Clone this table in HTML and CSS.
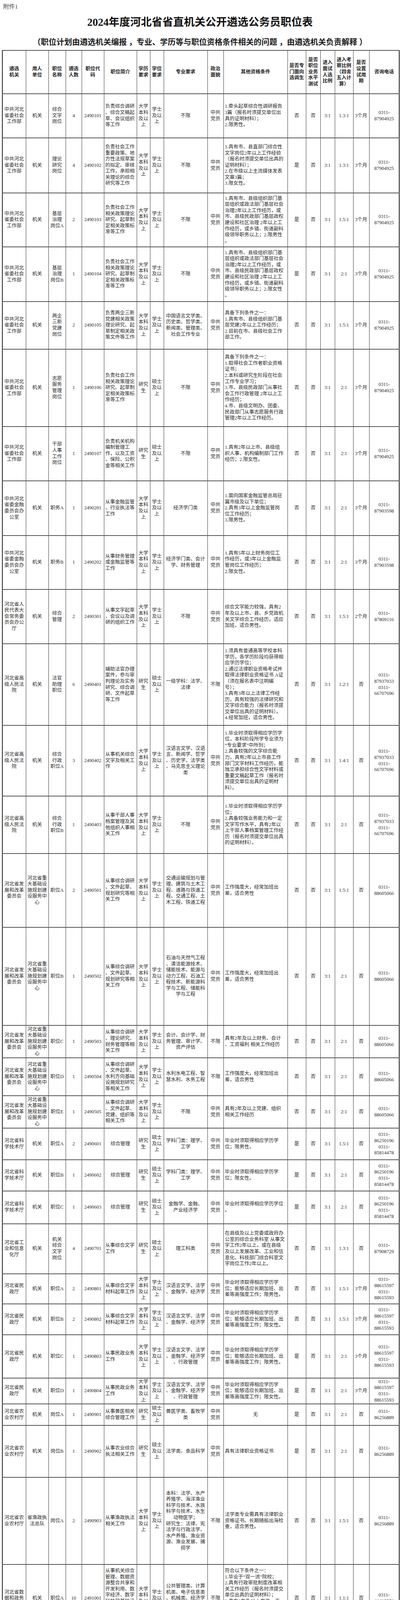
FILE: index.html
```html
<!DOCTYPE html>
<html lang="zh-CN">
<head>
<meta charset="utf-8">
<title>2024年度河北省省直机关公开遴选公务员职位表</title>
<link rel="stylesheet" href="styles.css">
</head>
<body>
<div class="page">
<div class="att">附件1</div>
<h1 class="title">2024年度河北省省直机关公开遴选公务员职位表</h1>
<p class="sub">（职位计划由遴选机关编报 ，专业、学历等与职位资格条件相关的问题 ，由遴选机关负责解释 ）</p>
<table class="jobs">
<colgroup>
<col class="w1"><col class="w2"><col class="w3"><col class="w4"><col class="w5"><col class="w6"><col class="w7"><col class="w8"><col class="w9"><col class="w10"><col class="w11"><col class="w12"><col class="w13"><col class="w14"><col class="w15"><col class="w16"><col class="w17">
</colgroup>
<thead>
<tr class="hd">
<th>遴选<br>机关</th><th>用人<br>单位</th><th>职位<br>名称</th><th>遴选<br>人数</th><th>职位代<br>码</th><th>职位简介</th><th>学历<br>要求</th><th>学位<br>要求</th><th>专业要求</th><th>政治<br>面貌</th><th>其他资格条件</th><th>是否专<br>门面向<br>选调生</th><th>是否<br>职位<br>业务<br>水平<br>测试</th><th>进入<br>面试<br>人选<br>比例</th><th>进入考<br>察比例<br>（四舍<br>五入计<br>算）</th><th>是否<br>设置<br>试用<br>期</th><th>咨询电话</th>
</tr>
</thead>
<tbody>
<tr class="r01">
<td>中共河北<br>省委社会<br>工作部</td><td>机关</td><td>综合<br>文字<br>岗位</td><td>4</td><td>2490101</td>
<td class="l">负责综合调研<br>、综合文稿起<br>草、会议组织<br>等工作</td>
<td>大学<br>本科<br>及以<br>上</td><td>学士<br>及以<br>上</td><td>不限</td><td>中共<br>党员</td>
<td class="l">1.牵头起草综合性调研报告<br>3篇（报名时须提交单位出<br>具的证明材料）；<br>2.限男性。</td>
<td>否</td><td>否</td><td>3:1</td><td>1.3:1</td><td>3个月</td><td>0311-<br>87904925</td>
</tr>
<tr class="r02">
<td>中共河北<br>省委社会<br>工作部</td><td>机关</td><td>理论<br>研究<br>岗位</td><td>4</td><td>2490102</td>
<td class="l">负责社会工作<br>重要政策、地<br>方性法规草案<br>的拟定、审核<br>工作，承担相<br>关理论的综合<br>研究等工作</td>
<td>大学<br>本科<br>及以<br>上</td><td>学士<br>及以<br>上</td><td>不限</td><td>中共<br>党员</td>
<td class="l">1.具有市、县直部门综合性<br>文字岗位2年以上工作经验<br>（报名时须提交单位出具的<br>证明材料）；<br>2.在市级以上主流媒体发表<br>文章3篇；<br>3.限女性。</td>
<td>是</td><td>否</td><td>3:1</td><td>1.3:1</td><td>3个月</td><td>0311-<br>87904925</td>
</tr>
<tr class="r03">
<td>中共河北<br>省委社会<br>工作部</td><td>机关</td><td>基层<br>治理<br>岗位A</td><td>2</td><td>2490103</td>
<td class="l">负责社会工作<br>相关政策理论<br>研究、起草制<br>定相关政策标<br>准等工作</td>
<td>大学<br>本科<br>及以<br>上</td><td>学士<br>及以<br>上</td><td>不限</td><td>中共<br>党员</td>
<td class="l">1.具有市、县级组织部门基<br>层组织或政法部门基层社会<br>治理2年以上工作经历，或<br>市、县级民政部门基层政权<br>建设和社区治理 2年以上工<br>作经历，或乡镇、街道副科<br>级领导职务以上；2.限男性<br>。</td>
<td>是</td><td>否</td><td>3:1</td><td>1.5:1</td><td>3个月</td><td>0311-<br>87904925</td>
</tr>
<tr class="r04">
<td>中共河北<br>省委社会<br>工作部</td><td>机关</td><td>基层<br>治理<br>岗位B</td><td>1</td><td>2490104</td>
<td class="l">负责社会工作<br>相关政策理论<br>研究、起草制<br>定相关政策标<br>准等工作</td>
<td>大学<br>本科<br>及以<br>上</td><td>学士<br>及以<br>上</td><td>不限</td><td>中共<br>党员</td>
<td class="l">1.具有市、县级组织部门基<br>层组织或政法部门基层社会<br>治理2年以上工作经历，或<br>市、县级民政部门基层政权<br>建设和社区治理 2年以上工<br>作经历，或乡镇、街道副科<br>级领导职务以上；2.限女性<br>。</td>
<td>是</td><td>否</td><td>3:1</td><td>2:1</td><td>3个月</td><td>0311-<br>87904925</td>
</tr>
<tr class="r05">
<td>中共河北<br>省委社会<br>工作部</td><td>机关</td><td>两企<br>三新<br>党建<br>岗位</td><td>2</td><td>2490105</td>
<td class="l">负责两企三新<br>党建相关政策<br>理论研究、起<br>草制定相关政<br>策文件等工作</td>
<td>大学<br>本科<br>及以<br>上</td><td>学士<br>及以<br>上</td><td>中国语言文学类、<br>历史类、哲学类、<br>新闻类、管理类、<br>社会工作专业</td><td>中共<br>党员</td>
<td class="l">具备下列条件之一：<br>1.具有市、县级组织部门基<br>层党建2年以上工作经历；<br>2.目前在市、县级社会工作<br>部工作。</td>
<td>否</td><td>否</td><td>3:1</td><td>1.5:1</td><td>3个月</td><td>0311-<br>87904925</td>
</tr>
<tr class="r06">
<td>中共河北<br>省委社会<br>工作部</td><td>机关</td><td>志愿<br>服务<br>管理<br>岗位</td><td>1</td><td>2490106</td>
<td class="l">负责社会工作<br>相关政策理论<br>研究、起草制<br>定相关政策标<br>准等工作</td>
<td>研究<br>生</td><td>硕士<br>及以<br>上</td><td>不限</td><td>中共<br>党员</td>
<td class="l">具备下列条件之一：<br>1.取得社会工作者职业资格<br>证书；<br>2.本科或研究生阶段在社会<br>工作专业学习；<br>3.市、县级民政部门从事社<br>会工作行政管理 2年以上工<br>作经历；<br>4.市、县级文明办、团委、<br>民政部门从事志愿服务行政<br>管理2年以上工作经历。</td>
<td>否</td><td>否</td><td>3:1</td><td>2:1</td><td>3个月</td><td>0311-<br>87904925</td>
</tr>
<tr class="r07">
<td>中共河北<br>省委社会<br>工作部</td><td>机关</td><td>干部<br>人事<br>工作<br>岗位</td><td>1</td><td>2490107</td>
<td class="l">负责机关机构<br>编制管理工<br>作，以及工资<br>、保险、公积<br>金等相关工作</td>
<td>研究<br>生</td><td>硕士<br>及以<br>上</td><td>不限</td><td>中共<br>党员</td>
<td class="l">1.具有2年以上市、县级组<br>织人事、机构编制部门工作<br>经历；2.限女性。</td>
<td>否</td><td>否</td><td>3:1</td><td>2:1</td><td>3个月</td><td>0311-<br>87904925</td>
</tr>
<tr class="r08">
<td>中共河北<br>省委金融<br>委员会办<br>公室</td><td>机关</td><td>职务A</td><td>1</td><td>2490201</td>
<td class="l">从事金融监管<br>、行业执法等<br>工作</td>
<td>大学<br>本科<br>及以<br>上</td><td>学士<br>及以<br>上</td><td>经济学门类</td><td>中共<br>党员</td>
<td class="l">1.面向国家金融监管总局驻<br>冀市级及以下单位；<br>2.具有3年以上金融监管岗<br>位工作经历；<br>3.限男性。</td>
<td>否</td><td>否</td><td>3:1</td><td>2:1</td><td>3个月</td><td>0311-<br>87903598</td>
</tr>
<tr class="r09">
<td>中共河北<br>省委金融<br>委员会办<br>公室</td><td>机关</td><td>职务B</td><td>1</td><td>2490202</td>
<td class="l">从事财务管理<br>或金融监管等<br>工作</td>
<td>大学<br>本科<br>及以<br>上</td><td>学士<br>及以<br>上</td><td>经济学门类、会计<br>学、财务管理</td><td>中共<br>党员</td>
<td class="l">1.具有5年以上财务岗位工<br>作经历，或3年以上金融监<br>管岗位工作经历；<br>2.限女性。</td>
<td>否</td><td>否</td><td>3:1</td><td>2:1</td><td>3个月</td><td>0311-<br>87903598</td>
</tr>
<tr class="r10">
<td>河北省人<br>民代表大<br>会常务委<br>员会办公<br>厅</td><td>机关</td><td>综合<br>管理</td><td>2</td><td>2490301</td>
<td class="l">从事文字起草<br>、会议以及调<br>研的组织工作</td>
<td>大学<br>本科<br>及以<br>上</td><td>学士<br>及以<br>上</td><td>不限</td><td>中共<br>党员</td>
<td class="l">综合文字能力较强，具有2<br>年及以上市、县、乡党政机<br>关文字综合工作经历，适应<br>加班，适合男性。</td>
<td>否</td><td>否</td><td>3:1</td><td>1.5:1</td><td>2个月</td><td>0311-<br>87809116</td>
</tr>
<tr class="r11">
<td>河北省高<br>级人民法<br>院</td><td>机关</td><td>法官<br>助理<br>职位</td><td>6</td><td>2490401</td>
<td class="l">辅助法官办理<br>案件，参与审<br>判理论及实务<br>研究、综合调<br>研、文件起草<br>等工作</td>
<td>研究<br>生</td><td>硕士<br>及以<br>上</td><td>一级学科：法学、<br>法律</td><td>不限</td>
<td class="l">1.须具有普通高等学校本科<br>学历，各学历阶段均获得相<br>应学历学位；<br>2.通过法律职业资格考试并<br>取得法律职业资格证书 A证<br>（须在报名表中注明编<br>号）；<br>3.具有3年以上法律工作经<br>历，具有较强的法律研究和<br>文字综合能力（报名时须提<br>交单位出具的证明材料）。<br>4.经常加班，适合男性。</td>
<td>否</td><td>否</td><td>3:1</td><td>1.2:1</td><td>否</td><td>0311-<br>87937033<br>0311-<br>66707696</td>
</tr>
<tr class="r12">
<td>河北省高<br>级人民法<br>院</td><td>机关</td><td>综合<br>行政<br>职位A</td><td>3</td><td>2490402</td>
<td class="l">从事机关综合<br>文字及相关工<br>作</td>
<td>大学<br>本科<br>及以<br>上</td><td>学士<br>及以<br>上</td><td>汉语言文学、汉语<br>言、新闻学、哲学<br>、历史学，法学类<br>、马克思主义理论<br>类</td><td>中共<br>党员</td>
<td class="l">1.毕业时须取得相应学历学<br>位，本科阶段所学专业须为<br>“专业要求”中所列；<br>2.具备较强的文字综合能<br>力，具有2年以上市县工作<br>部门文字材料工作经历，能<br>独立承担综合性文字材料或<br>重要文稿起草工作（报名时<br>须提交单位出具的证明材<br>料）。</td>
<td>否</td><td>否</td><td>3:1</td><td>1.4:1</td><td>否</td><td>0311-<br>87937033<br>0311-<br>66707696</td>
</tr>
<tr class="r13">
<td>河北省高<br>级人民法<br>院</td><td>机关</td><td>综合<br>行政<br>职位B</td><td>1</td><td>2490403</td>
<td class="l">从事干部人事<br>档案管理及其<br>他组织人事相<br>关工作</td>
<td>大学<br>本科<br>及以<br>上</td><td>学士<br>及以<br>上</td><td>不限</td><td>中共<br>党员</td>
<td class="l">1.毕业时须取得相应学历学<br>位；<br>2.具备较强业务能力和一定<br>文字写作水平，具有2年以<br>上干部人事档案管理工作经<br>历（报名时须提交单位出具<br>的证明材料）。</td>
<td>否</td><td>否</td><td>3:1</td><td>2:1</td><td>否</td><td>0311-<br>87937033<br>0311-<br>66707696</td>
</tr>
<tr class="r14">
<td>河北省发<br>展和改革<br>委员会</td><td>河北省重<br>大基础设<br>施规划建<br>设服务中<br>心</td><td>职位A</td><td>2</td><td>2490501</td>
<td class="l">从事综合调研<br>、文件起草、<br>规划研究等相<br>关工作</td>
<td>大学<br>本科<br>及以<br>上</td><td>学士<br>及以<br>上</td><td>交通运输规划与管<br>理、建筑与土木工<br>程、道路与铁道工<br>程、交通工程、土<br>木工程、铁道工程</td><td>中共<br>党员</td>
<td class="l">工作强度大，经常加班出<br>差，适合男性</td>
<td>否</td><td>否</td><td>3:1</td><td>1.5:1</td><td>否</td><td>0311-<br>88605066</td>
</tr>
<tr class="r15">
<td>河北省发<br>展和改革<br>委员会</td><td>河北省重<br>大基础设<br>施规划建<br>设服务中<br>心</td><td>职位B</td><td>1</td><td>2490502</td>
<td class="l">从事综合调研<br>、文件起草、<br>规划研究等相<br>关工作</td>
<td>大学<br>本科<br>及以<br>上</td><td>学士<br>及以<br>上</td><td>石油与天然气工程<br>、清洁能源技术、<br>储能技术、能源与<br>动力工程、石油工<br>程技术、新能源科<br>学与工程、储能科<br>学与工程</td><td>中共<br>党员</td>
<td class="l">工作强度大，经常加班出<br>差，适合男性</td>
<td>否</td><td>否</td><td>3:1</td><td>2:1</td><td>否</td><td>0311-<br>88605066</td>
</tr>
<tr class="r16">
<td>河北省发<br>展和改革<br>委员会</td><td>河北省重<br>大基础设<br>施规划建<br>设服务中<br>心</td><td>职位C</td><td>1</td><td>2490503</td>
<td class="l">从事综合调研<br>、理论研究、<br>财务管理等相<br>关工作</td>
<td>大学<br>本科<br>及以<br>上</td><td>学士<br>及以<br>上</td><td>会计、会计学、财<br>务管理、审计学、<br>资产评估</td><td>不限</td>
<td class="l">具有2年及以上财务、会计<br>、工资福利 相关工作经历</td>
<td>否</td><td>否</td><td>3:1</td><td>2:1</td><td>否</td><td>0311-<br>88605066</td>
</tr>
<tr class="r17">
<td>河北省发<br>展和改革<br>委员会</td><td>河北省重<br>大基础设<br>施规划建<br>设服务中<br>心</td><td>职位D</td><td>1</td><td>2490504</td>
<td class="l">从事综合调研<br>、文件起草、<br>水利方向基础<br>设施规划研究<br>等相关工作</td>
<td>大学<br>本科<br>及以<br>上</td><td>学士<br>及以<br>上</td><td>水利水电工程、智<br>慧水利、水务工程</td><td>不限</td>
<td class="l">工作强度大，经常加班出<br>差，适合男性</td>
<td>否</td><td>否</td><td>3:1</td><td>2:1</td><td>否</td><td>0311-<br>88605066</td>
</tr>
<tr class="r18">
<td>河北省发<br>展和改革<br>委员会</td><td>河北省重<br>大基础设<br>施规划建<br>设服务中<br>心</td><td>职位E</td><td>1</td><td>2490505</td>
<td class="l">从事综合调研<br>、文件起草、<br>党建、组织等<br>相关工作</td>
<td>大学<br>本科<br>及以<br>上</td><td>学士<br>及以<br>上</td><td>不限</td><td>中共<br>党员</td>
<td class="l">具有2年及以上党建、组织<br>相关工作经历</td>
<td>否</td><td>否</td><td>3:1</td><td>2:1</td><td>否</td><td>0311-<br>88605066</td>
</tr>
<tr class="r19">
<td>河北省科<br>学技术厅</td><td>机关</td><td>职位A</td><td>2</td><td>2490601</td>
<td>综合管理</td>
<td>研究<br>生</td><td>硕士<br>及以<br>上</td><td>学科门类：理学、<br>工学</td><td>中共<br>党员</td>
<td class="l">毕业时须取得相应学历学<br>位；限男性。</td>
<td>是</td><td>否</td><td>3:1</td><td>1.5:1</td><td>否</td><td>0311-<br>86250196<br>0311-<br>85814478</td>
</tr>
<tr class="r20">
<td>河北省科<br>学技术厅</td><td>机关</td><td>职位B</td><td>1</td><td>2490602</td>
<td>综合管理</td>
<td>研究<br>生</td><td>硕士<br>及以<br>上</td><td>学科门类：理学、<br>工学</td><td>中共<br>党员</td>
<td class="l">毕业时须取得相应学历学<br>位；限女性。</td>
<td>是</td><td>否</td><td>3:1</td><td>2:1</td><td>否</td><td>0311-<br>86250196<br>0311-<br>85814478</td>
</tr>
<tr class="r21">
<td>河北省科<br>学技术厅</td><td>机关</td><td>职位C</td><td>1</td><td>2490603</td>
<td>综合管理</td>
<td>研究<br>生</td><td>硕士<br>及以<br>上</td><td>金融学、金融、<br>产业经济学</td><td>中共<br>党员</td>
<td class="l">毕业时须取得相应学历学位<br>。</td>
<td>是</td><td>否</td><td>3:1</td><td>2:1</td><td>否</td><td>0311-<br>86250196<br>0311-<br>85814478</td>
</tr>
<tr class="r22">
<td>河北省工<br>业和信息<br>化厅</td><td>机关</td><td>机关<br>综合<br>文字<br>岗位</td><td>4</td><td>2490701</td>
<td class="l">从事综合文字<br>工作</td>
<td>研究<br>生</td><td>硕士<br>及以<br>上</td><td>理工科类</td><td>中共<br>党员</td>
<td class="l">在县级及以上党委或政府办<br>公室的综合业务科室 从事文<br>字工作2年以上，或在县级<br>及以上发展改革、工业和信<br>息化、科技部门综合科室文<br>字岗位工作2年以上。</td>
<td>否</td><td>否</td><td>3:1</td><td>1.3:1</td><td>否</td><td>0311-<br>87908729</td>
</tr>
<tr class="r23">
<td>河北省民<br>政厅</td><td>机关</td><td>职位A</td><td>2</td><td>2490801</td>
<td class="l">从事综合文字<br>材料起草工作</td>
<td>大学<br>本科<br>及以<br>上</td><td>学士<br>及以<br>上</td><td>汉语言文学、法学<br>、金融学、经济学</td><td>中共<br>党员</td>
<td class="l">毕业时须取得相应学历学<br>位；能够适应长期加班、出<br>差等高强度工作；限男性。</td>
<td>否</td><td>否</td><td>3:1</td><td>1.5:1</td><td>3个月</td><td>0311-<br>88615597<br>0311-<br>88615593</td>
</tr>
<tr class="r24">
<td>河北省民<br>政厅</td><td>机关</td><td>职位B</td><td>2</td><td>2490802</td>
<td class="l">从事综合文字<br>材料起草工作</td>
<td>大学<br>本科<br>及以<br>上</td><td>学士<br>及以<br>上</td><td>汉语言文学、法学<br>、金融学、经济学</td><td>中共<br>党员</td>
<td class="l">毕业时须取得相应学历学<br>位；能够适应长期加班、出<br>差等高强度工作；限女性。</td>
<td>否</td><td>否</td><td>3:1</td><td>1.5:1</td><td>3个月</td><td>0311-<br>88615597<br>0311-<br>88615593</td>
</tr>
<tr class="r25">
<td>河北省民<br>政厅</td><td>机关</td><td>职位C</td><td>1</td><td>2490803</td>
<td class="l">从事民政业务<br>工作</td>
<td>大学<br>本科<br>及以<br>上</td><td>学士<br>及以<br>上</td><td>汉语言文学、法学<br>、金融学、经济学<br>、行政管理</td><td>中共<br>党员</td>
<td class="l">毕业时须取得相应学历学<br>位；能够适应长期加班、出<br>差等高强度工作；限男性。</td>
<td>是</td><td>否</td><td>3:1</td><td>2:1</td><td>3个月</td><td>0311-<br>88615597<br>0311-<br>88615593</td>
</tr>
<tr class="r26">
<td>河北省民<br>政厅</td><td>机关</td><td>职位D</td><td>1</td><td>2490804</td>
<td class="l">从事民政业务<br>工作</td>
<td>大学<br>本科<br>及以<br>上</td><td>学士<br>及以<br>上</td><td>汉语言文学、法学<br>、金融学、经济学<br>、行政管理</td><td>中共<br>党员</td>
<td class="l">毕业时须取得相应学历学<br>位；能够适应长期加班、出<br>差等高强度工作；限女性。</td>
<td>是</td><td>否</td><td>3:1</td><td>2:1</td><td>3个月</td><td>0311-<br>88615597<br>0311-<br>88615593</td>
</tr>
<tr class="r27">
<td>河北省农<br>业农村厅</td><td>机关</td><td>岗位A</td><td>1</td><td>2490901</td>
<td class="l">从事兽医相关<br>综合管理工作</td>
<td>研究<br>生</td><td>硕士<br>及以<br>上</td><td>兽医学类、畜牧学<br>类</td><td>中共<br>党员</td>
<td>无</td>
<td>是</td><td>否</td><td>3:1</td><td>2:1</td><td>否</td><td>0311-<br>86256889</td>
</tr>
<tr class="r28">
<td>河北省农<br>业农村厅</td><td>机关</td><td>岗位B</td><td>1</td><td>2490902</td>
<td class="l">从事农业综合<br>执法相关工作</td>
<td>研究<br>生</td><td>硕士<br>及以<br>上</td><td>法学类、食品科学</td><td>中共<br>党员</td>
<td class="l">具有法律职业资格证书</td>
<td>是</td><td>否</td><td>3:1</td><td>2:1</td><td>否</td><td>0311-<br>86256889</td>
</tr>
<tr class="r29">
<td>河北省农<br>业农村厅</td><td>省渔政执<br>法总队</td><td>岗位A</td><td>2</td><td>2490903</td>
<td class="l">从事渔政执法<br>相关工作</td>
<td>大学<br>本科<br>及以<br>上</td><td>学士<br>及以<br>上</td><td>本科：法学、水产<br>养殖学、海洋渔业<br>科学与技术、水族<br>科学与技术、水生<br>动物医学；<br>研究生：法律、宪<br>法学与行政法学、<br>水产养殖、渔业资<br>源、渔业发展、捕<br>捞学</td><td>不限</td>
<td class="l">法学类专业需具有法律职业<br>资格证书。长期随船出海检<br>查，适合男性。</td>
<td>否</td><td>否</td><td>3:1</td><td>1.5:1</td><td>否</td><td>0311-<br>86256889</td>
</tr>
<tr class="r30">
<td>河北省数<br>据和政务<br>服务局</td><td>机关</td><td>职位A</td><td>10</td><td>2491001</td>
<td class="l">从事机关综合<br>管理、数据资<br>源整合共享和<br>开发利用、数<br>字经济、数字<br>科技和基础设<br>施建设、数字<br>政府建设、行<br>政审批制度改<br>革相关工作</td>
<td>大学<br>本科<br>及以<br>上</td><td>学士<br>及以<br>上</td><td>公共管理类、计算<br>机类、电子信息类<br>、机械类、经济学<br>类、社会学类、环<br>境科学与工程类</td><td>不限</td>
<td class="l">符合以下条件之一：<br>1.毕业于“双一流”院校；<br>2.具有行政审批制度改革相<br>关工作经历（报名时须提交<br>单位出具的证明材料）；<br>3.具有2年及以上发改、工<br>信、商务系统从事数字经济<br>或信息化项目建设工作经历<br>（报名时须提交单位出具的<br>证明材料）。</td>
<td>否</td><td>否</td><td>3:1</td><td>1.1:1</td><td>否</td><td>0311-<br>66635576</td>
</tr>
</tbody>
</table>
</div>
</body>
</html>
```
FILE: styles.css
```css
html, body {
  margin: 0;
  padding: 0;
  background: #fff;
}
body {
  font-family: "Liberation Serif", "Noto Sans CJK SC", serif;
  color: #2a2a2a;
}
.page {
  width: 1024px;
}
.att {
  padding: 7px 0 0 8px;
  font-size: 15px;
  line-height: 20px;
  color: #444;
}
.title {
  margin: 13px 0 0;
  text-align: center;
  font-size: 27.5px;
  line-height: 34px;
  font-weight: bold;
  color: #111;
}
.sub {
  margin: 21px 0 0;
  text-align: center;
  font-size: 20px;
  line-height: 26px;
  font-weight: bold;
  color: #1a1a1a;
  white-space: nowrap;
}
.jobs {
  margin: 7px 0 0 5px;
  width: 1016px;
  table-layout: fixed;
  border-collapse: collapse;
  border: 2px solid #222;
  font-size: 12.5px;
  line-height: 15.6px;
}
.jobs th,
.jobs td {
  border-left: 1px solid #3a3a3a;
  border-right: 1px solid #3a3a3a;
  border-top: 2px solid #555;
  border-bottom: 2px solid #555;
  padding: 0 2px;
  text-align: center;
  vertical-align: middle;
  white-space: nowrap;
  overflow: visible;
}
.jobs th {
  font-weight: bold;
  color: #222;
}
.jobs td.l {
  text-align: left;
  padding-left: 3px;
}
.w1 { width: 60px; }
.w2 { width: 58px; }
.w3 { width: 44px; }
.w4 { width: 41px; }
.w5 { width: 57px; }
.w6 { width: 84px; }
.w7 { width: 34px; }
.w8 { width: 35px; }
.w9 { width: 112px; }
.w10 { width: 41px; }
.w11 { width: 164px; }
.w12 { width: 47px; }
.w13 { width: 37px; }
.w14 { width: 37px; }
.w15 { width: 47px; }
.w16 { width: 41px; }
.w17 { width: 77px; }

.hd { height: 111px; }
.r01 { height: 113px; }
.r02 { height: 141px; }
.r03 { height: 138px; }
.r04 { height: 140px; }
.r05 { height: 122px; }
.r06 { height: 198px; }
.r07 { height: 139px; }
.r08 { height: 140px; }
.r09 { height: 138px; }
.r10 { height: 139px; }
.r11 { height: 209px; }
.r12 { height: 181px; }
.r13 { height: 147px; }
.r14 { height: 189px; }
.r15 { height: 251px; }
.r16 { height: 83px; }
.r17 { height: 97px; }
.r18 { height: 83px; }
.r19 { height: 81px; }
.r20 { height: 80px; }
.r21 { height: 84px; }
.r22 { height: 128px; }
.r23 { height: 77px; }
.r24 { height: 79px; }
.r25 { height: 111px; }
.r26 { height: 66px; }
.r27 { height: 55px; }
.r28 { height: 133px; }
.r29 { height: 223px; }
.r30 { height: 174px; }
```
